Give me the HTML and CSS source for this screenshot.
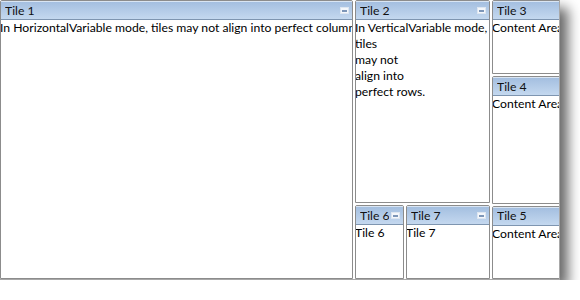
FILE: index.html
```html
<!DOCTYPE html>
<html>
<head>
<meta charset="utf-8">
<link rel="stylesheet" href="styles.css">
</head>
<body>
<div class="window">
  <div class="col col-1">
    <div class="tile tile-1">
      <div class="tile-header"><span class="title">Tile 1</span><span class="min"></span></div>
      <div class="tile-content">In HorizontalVariable mode, tiles may not align into perfect columns.</div>
    </div>
  </div>
  <div class="col col-2">
    <div class="tile tile-2">
      <div class="tile-header"><span class="title">Tile 2</span><span class="min"></span></div>
      <div class="tile-content">In VerticalVariable mode,<br>tiles<br>may not<br>align into<br>perfect rows.</div>
    </div>
    <div class="row-bottom">
      <div class="tile tile-6">
        <div class="tile-header"><span class="title">Tile 6</span><span class="min"></span></div>
        <div class="tile-content">Tile 6</div>
      </div>
      <div class="tile tile-7">
        <div class="tile-header"><span class="title">Tile 7</span><span class="min"></span></div>
        <div class="tile-content">Tile 7</div>
      </div>
    </div>
  </div>
  <div class="col col-3">
    <div class="tile tile-3">
      <div class="tile-header"><span class="title">Tile 3</span><span class="min"></span></div>
      <div class="tile-content">Content Area</div>
    </div>
    <div class="tile tile-4">
      <div class="tile-header"><span class="title">Tile 4</span><span class="min"></span></div>
      <div class="tile-content">Content Area</div>
    </div>
    <div class="tile tile-5">
      <div class="tile-header"><span class="title">Tile 5</span><span class="min"></span></div>
      <div class="tile-content">Content Area</div>
    </div>
  </div>
</div>
</body>
</html>
```
FILE: styles.css
```css
html, body {
  margin: 0;
  padding: 0;
  background: #ffffff;
}
body {
  font-family: Lato, "Open Sans", sans-serif;
  font-size: 12.2px;
  color: #000;
}
.window {
  width: 559px;
  height: 279px;
  background: #fff;
  overflow: hidden;
  display: flex;
  gap: 2px;
  box-shadow: 8px 8px 12px rgba(0, 0, 0, 0.6);
  border-right: 1px solid #a8a8a8;
  border-bottom: 1px solid #a8a8a8;
}
.col {
  display: flex;
  flex-direction: column;
  gap: 2px;
  flex: none;
}
.col-1 { width: 353px; }
.col-2 { width: 135px; }
.col-3 { width: 80px; }
.tile {
  border: 1px solid #8c8c8c;
  border-radius: 2px 2px 0 0;
  box-sizing: border-box;
  background: #fff;
  display: flex;
  flex-direction: column;
  overflow: hidden;
  min-width: 0;
}
.tile-1 { height: 280px; }
.tile-2 { height: 205px; }
.row-bottom {
  display: flex;
  gap: 2px;
  height: 74px;
}
.tile-6 { width: 49px; height: 74px; }
.tile-7 { width: 84px; height: 74px; }
.tile-3 { height: 75px; }
.tile-4 { height: 128px; }
.tile-5 { height: 74px; }
.tile-header {
  height: 19px;
  flex: none;
  box-sizing: border-box;
  background: linear-gradient(#a4bfe0, #c4d8ef);
  border-bottom: 1px solid #7e95b0;
  border-top: 1px solid #d9e5f3;
  display: flex;
  align-items: center;
  padding: 0 3px 0 4px;
  line-height: 16px;
}
.title {
  flex: 1;
  white-space: nowrap;
  overflow: hidden;
  color: #111;
}
.min {
  flex: none;
  width: 9px;
  height: 7px;
  box-sizing: border-box;
  background: #f4f7fb;
  border: 1px solid #dde6f1;
  position: relative;
  margin-left: 2px;
}
.min::after {
  content: "";
  position: absolute;
  left: 1px;
  right: 1px;
  top: 2px;
  height: 2px;
  background: #7d96b8;
}
.tile-content {
  line-height: 16px;
  padding: 0;
  margin-left: -1px;
  overflow: hidden;
  white-space: nowrap;
}
.col-3 .tile { width: 80px; }
```
